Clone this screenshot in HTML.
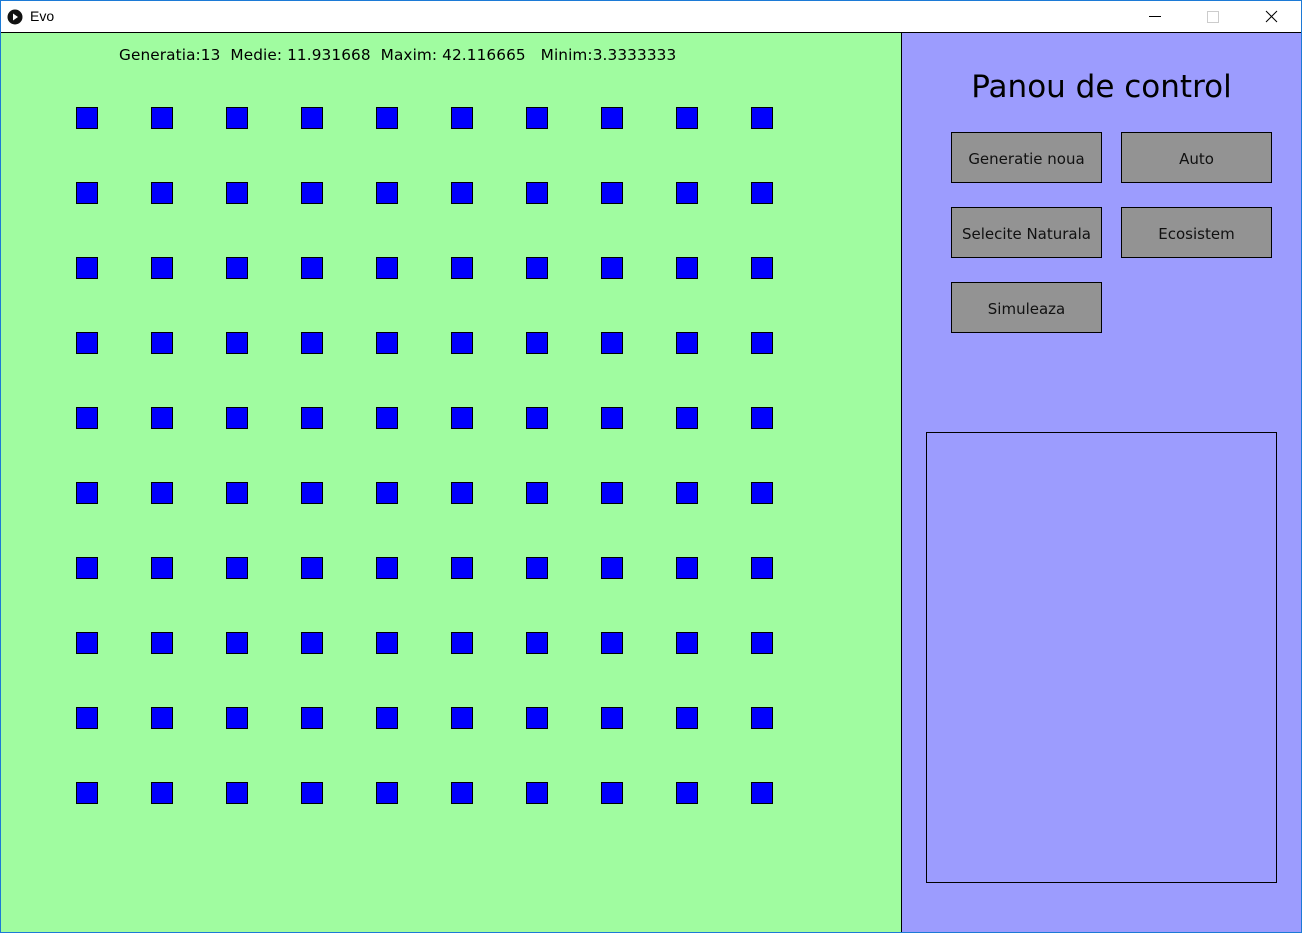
<!DOCTYPE html>
<html><head><meta charset="utf-8"><style>
*{margin:0;padding:0;box-sizing:border-box}
body{width:1302px;height:933px;position:relative;background:#fff;font-family:"DejaVu Sans","Liberation Sans",sans-serif;overflow:hidden}
.frame{position:absolute;left:0;top:0;width:1302px;height:933px;border:1px solid #1c7ad6;}
.title{position:absolute;left:1px;top:1px;width:1300px;height:31px;background:#fff}
.title .t{position:absolute;left:29px;top:7px;font-size:14px;font-family:"Liberation Sans",sans-serif;color:#000}
.green{position:absolute;left:1px;top:32px;width:900px;height:900px;background:#a0fca0;border-top:1px solid #000}
.vline{position:absolute;left:901px;top:32px;width:1px;height:900px;background:#000}
.purple{position:absolute;left:902px;top:32px;width:399px;height:900px;background:#9c9cfe;border-top:1px solid #000}
.sq{position:absolute;width:22px;height:22px;background:#0000fc;border:1px solid #000}
.stats{position:absolute;left:119px;top:46px;font-size:15.3px;color:#000;white-space:pre;letter-spacing:0.1px}
.btn{position:absolute;width:151px;height:51px;background:#939393;border:1px solid #000;font-size:15px;text-align:center;line-height:52px;color:#111}
.h{position:absolute;left:902px;top:69px;width:399px;text-align:center;font-size:31px;color:#000}
.box{position:absolute;left:926px;top:432px;width:351px;height:451px;border:1px solid #000}
</style></head><body>
<div class="frame"></div>
<div class="title">
<svg style="position:absolute;left:6px;top:8px" width="16" height="16"><circle cx="8" cy="8" r="7.5" fill="#111"/><path d="M6 4.5L11 8L6 11.5Z" fill="#fff"/></svg>
<span class="t">Evo</span>
<svg style="position:absolute;left:1140px;top:8px" width="150" height="16"><line x1="8" y1="7.5" x2="20" y2="7.5" stroke="#000"/><rect x="66.5" y="2.5" width="11" height="11" fill="none" stroke="#ccc"/><path d="M125 2L136 13M136 2L125 13" stroke="#000"/></svg>
</div>
<div class="green"></div>
<div class="vline"></div>
<div class="purple"></div>
<div class="stats">Generatia:13  Medie: 11.931668  Maxim: 42.116665   Minim:3.3333333</div>
<div id="g"></div>
<div class="h">Panou de control</div>
<div class="btn" style="left:951px;top:132px">Generatie noua</div>
<div class="btn" style="left:1121px;top:132px">Auto</div>
<div class="btn" style="left:951px;top:207px">Selecite Naturala</div>
<div class="btn" style="left:1121px;top:207px">Ecosistem</div>
<div class="btn" style="left:951px;top:282px">Simuleaza</div>
<div class="box"></div>
<script>
var g=document.getElementById('g'),h='';
for(var r=0;r<10;r++)for(var c=0;c<10;c++)h+='<div class="sq" style="left:'+(76+75*c)+'px;top:'+(107+75*r)+'px"></div>';
g.innerHTML=h;
</script>
</body></html>
